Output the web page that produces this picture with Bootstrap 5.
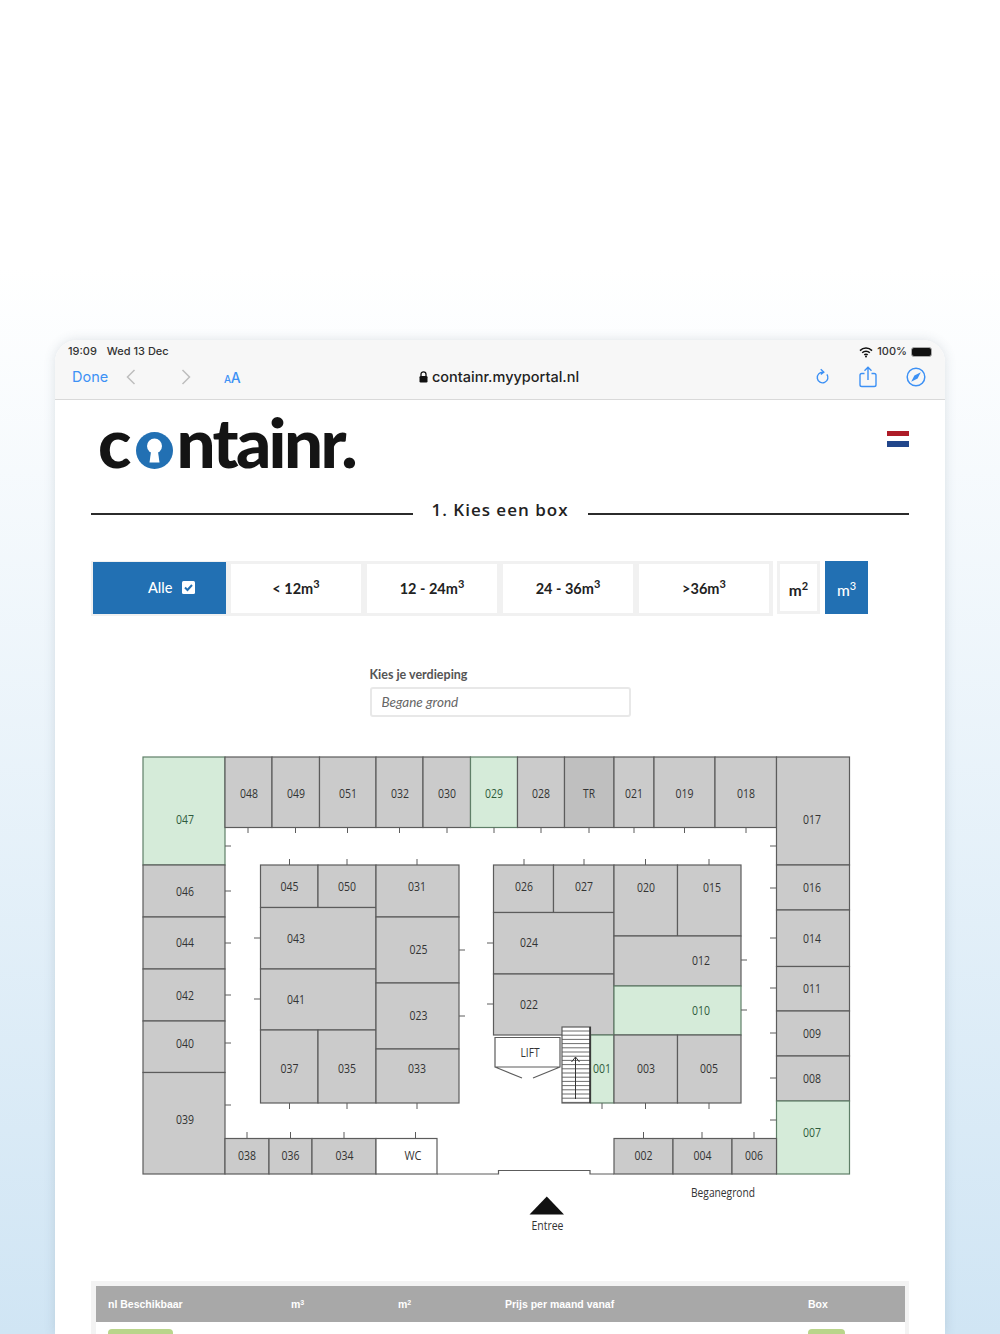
<!DOCTYPE html>
<html lang="nl">
<head>
  <meta charset="UTF-8">
  <meta name="viewport" content="width=device-width, initial-scale=1.0">
  <title>Containr - Kies een box</title>
  <link href="https://cdn.jsdelivr.net/npm/bootstrap@5.3.0/dist/css/bootstrap.min.css" rel="stylesheet">
  <style>
    html, body { height: 1334px; overflow: hidden; }
    body {
      font-family: "Lato", "Liberation Sans", sans-serif;
      background: linear-gradient(#fff 20%, #d0e5f4 100%);
      padding: 340px 55px 0;
    }
    .tablet {
      height: 994px;
      background: #fff;
      border-radius: 22px 22px 0 0;
      box-shadow: 0 0 12px rgba(60, 80, 100, .16);
      overflow: hidden;
    }

    /* safari chrome */
    .chrome { height: 60px; background: #f7f7f7; border-bottom: 1px solid #d9d9d9; font-family: "Inter", "Liberation Sans", sans-serif; }
    .status-row { height: 22px; padding: 3px 13px 0; font-size: 11px; font-weight: 500; color: #333; }
    .status-date { margin-left: 10px; }
    .tool-row { height: 37px; padding: 0 13px 7px 17px; }
    .tool-side { flex: 1 1 0; }
    .done-link { font-size: 14.5px; color: #3d91f5; width: 54px; }
    .next-arrow { margin-left: 45px; }
    .aa-label { color: #3d91f5; font-weight: 500; font-size: 14px; margin-left: 33px; letter-spacing: -.3px; }
    .aa-label small { font-size: 10px; }
    .url-text { font-size: 14.5px; font-weight: 500; color: #222; }
    .tool-icons { gap: 29px; padding-right: 6px; }
    .battery-shell { width: 21px; height: 10px; background: #111; border-radius: 3px; border: 1px solid #aaa; }

    /* page head */
    .page-head { height: 92px; padding: 10px 36px 0 43px; }
    .logo-word { font-family: "Lato", sans-serif; font-weight: 900; font-size: 69px; line-height: 64px; color: #141414; height: 64px; }
    .logo-tail { letter-spacing: -2.6px; margin-left: 2px; }
    .logo-key { margin: 22px 1px 0 5px; flex: none; }
    .flag-nl { width: 22px; height: 16px; margin-top: 21px; background: linear-gradient(#ae1c28 0 5px, #fff 5px 10px, #21468b 10px 16px); }

    .step-title { height: 44px; padding: 0 36px; }
    .step-line { flex: 1; height: 2px; background: #2b2b2b; }
    .step-title h2 { font-family: "Open Sans", sans-serif; font-size: 17px; font-weight: 600; letter-spacing: 1px; color: #222; margin: -7px 19px 0; }

    /* filters */
    .filter-bar { padding: 25px 0 0 36px; height: 131px; }
    .filter-group { background: #f1f1f1; padding: 3px 4px 3px 2px; height: 55px; gap: 6px; }
    .filter-btn {
      width: 130px; height: 49px; border-radius: 0; border: 0; padding: 0;
      background: #fff; color: #222; font-size: 14.5px; font-weight: 700;
    }
    .filter-btn sup { font-size: 11px; }
    .filter-btn.is-on, .unit-btn.is-on { background: #2270b3; color: #fff; font-weight: 500; }
    .filter-btn.is-on { width: 133px; height: 52px; margin: -2px -1px 0 0; padding-left: 24px; }
    .check-box { width: 13px; height: 13px; margin-left: 6px; vertical-align: -1px; }
    .unit-btn {
      width: 43px; height: 53px; border-radius: 0; padding: 6px 0 0; margin-left: 5px;
      background: #fff; border: 3px solid #f1f1f1; color: #222; font-size: 15.5px; font-weight: 700;
    }
    .filter-group + .unit-btn { margin-left: 4px; }
    .unit-btn.is-on { border-color: #2270b3; }
    .unit-btn sup { font-size: 11px; }

    /* floor */
    .floor-pick { width: 261px; height: 83px; margin: 0 auto; }
    .floor-pick label { font-size: 12.5px; font-weight: 700; color: #555; margin-bottom: 5px; display: block; line-height: 15px; }
    .floor-input.form-control { height: 30px; border: 2px solid #e8e8e8; border-radius: 3px; font-size: 13.5px; font-style: italic; color: #666; padding: 0 10px; }
    .plan-svg { display: block; margin: -5px auto 0; }
    .plan-svg text { font-family: "Open Sans", "Liberation Sans", sans-serif; font-size: 13.5px; fill: #333; text-anchor: middle; dominant-baseline: central; }
    .plan-svg text.on-green { fill: #2f5b3c; }

    /* result table */
    .result-wrap { margin: 41px 36px 0; padding: 5px 4px 0 5px; background: #f3f3f3; font-family: "Liberation Sans", sans-serif; }
    .result-table.table { margin: 0; table-layout: fixed; }
    .result-table th { background: #a8a8a8; color: #fff; font-size: 10.5px; font-weight: 700; padding: 10px 12px; height: 36px; line-height: 16px; border: 0; vertical-align: middle; }
    .result-table th sup { font-size: 7px; }
    .result-table td { background: #fff; padding: 7px 12px; font-size: 12px; border: 0; }
    .pill-green { display: block; height: 20px; background: #b9d58b; border-radius: 4px; }
    .pill-wide { width: 65px; }
    .pill-short { width: 37px; }
  </style>
</head>
<body>
  <div class="tablet">
    <div class="chrome">
      <div class="status-row d-flex justify-content-between">
        <div class="d-flex"><span>19:09</span><span class="status-date">Wed 13 Dec</span></div>
        <div class="d-flex align-items-start">
          <svg width="14" height="11" viewBox="0 0 14 11" class="me-1 mt-1"><path d="M1 3.6a8.5 8.5 0 0 1 12 0M3.2 5.8a5.4 5.4 0 0 1 7.6 0M5.3 7.9a2.4 2.4 0 0 1 3.4 0" fill="none" stroke="#111" stroke-width="1.5"/><circle cx="7" cy="9.6" r="1" fill="#111"/></svg>
          <span class="me-1">100%</span>
          <div class="battery-shell mt-1"></div>
        </div>
      </div>
      <div class="tool-row d-flex align-items-center">
        <div class="tool-side d-flex align-items-center">
          <span class="done-link">Done</span>
          <svg width="10" height="16" viewBox="0 0 10 16"><path d="M8.5 1 1.5 8l7 7" fill="none" stroke="#bdbdbd" stroke-width="1.5"/></svg>
          <svg width="10" height="16" viewBox="0 0 10 16" class="next-arrow"><path d="M1.5 1l7 7-7 7" fill="none" stroke="#bdbdbd" stroke-width="1.5"/></svg>
          <span class="aa-label"><small>A</small>A</span>
        </div>
        <div class="d-flex align-items-center gap-1">
          <svg width="9" height="12" viewBox="0 0 9 12"><path d="M2 5V3.3a2.5 2.5 0 0 1 5 0V5" fill="none" stroke="#111" stroke-width="1.3"/><rect x=".5" y="5" width="8" height="6.5" rx="1.2" fill="#111"/></svg>
          <span class="url-text">containr.myyportal.nl</span>
        </div>
        <div class="tool-side d-flex justify-content-end align-items-center tool-icons">
          <svg width="16" height="18" viewBox="0 0 18 20"><path d="M10.2 4.6a6 6 0 1 0 4.3 2.4" fill="none" stroke="#3d91f5" stroke-width="1.6"/><path d="M7.6 1.2l3.4 3.3-3.4 2.5" fill="none" stroke="#3d91f5" stroke-width="1.6"/></svg>
          <svg width="18" height="22" viewBox="0 0 18 22"><path d="M5.5 7.5H2.8A1.8 1.8 0 0 0 1 9.3v9.4a1.8 1.8 0 0 0 1.8 1.8h12.4a1.8 1.8 0 0 0 1.8-1.8V9.3a1.8 1.8 0 0 0-1.8-1.8h-2.7M9 14V1.5M5.5 4.8 9 1.3l3.5 3.5" fill="none" stroke="#3d91f5" stroke-width="1.4"/></svg>
          <svg width="20" height="20" viewBox="0 0 20 20"><circle cx="10" cy="10" r="8.8" fill="none" stroke="#3d91f5" stroke-width="1.5"/><path d="M14.8 5.2 11.6 11.6 5.2 14.8 8.4 8.4z" fill="#3d91f5"/></svg>
        </div>
      </div>
    </div>

    <div class="page-head d-flex justify-content-between">
      <div class="logo-word d-flex">
        <span>c</span>
        <svg class="logo-key" width="37" height="37" viewBox="0 0 37 37"><circle cx="18.5" cy="18.5" r="18.5" fill="#2270b3"/><circle cx="18.5" cy="14" r="7.5" fill="#fff"/><path d="M15.5 16h6l2 14.5h-10z" fill="#fff"/></svg>
        <span class="logo-tail">ntainr.</span>
      </div>
      <div class="flag-nl"></div>
    </div>

    <div class="step-title d-flex align-items-center">
      <div class="step-line"></div>
      <h2>1. Kies een box</h2>
      <div class="step-line"></div>
    </div>

    <div class="filter-bar d-flex align-items-start">
      <div class="filter-group d-flex align-items-start">
        <button class="btn filter-btn is-on">Alle <svg class="check-box" viewBox="0 0 13 13"><rect width="13" height="13" rx="1.5" fill="#fff"/><path d="M3 6.5l2.5 2.5L10 4" fill="none" stroke="#2270b3" stroke-width="2"/></svg></button>
        <button class="btn filter-btn">&lt; 12m<sup>3</sup></button>
        <button class="btn filter-btn">12 - 24m<sup>3</sup></button>
        <button class="btn filter-btn">24 - 36m<sup>3</sup></button>
        <button class="btn filter-btn">&gt;36m<sup>3</sup></button>
      </div>
      <button class="btn unit-btn">m<sup>2</sup></button>
      <button class="btn unit-btn is-on">m<sup>3</sup></button>
    </div>

    <div class="floor-pick">
      <label for="floorInput">Kies je verdieping</label>
      <input id="floorInput" class="form-control floor-input" type="text" value="Begane grond">
    </div>

    <svg id="plan" class="plan-svg" width="740" height="495" viewBox="130 745 740 495"></svg>

    <div class="result-wrap">
      <table class="table result-table">
        <thead>
          <tr><th id="colFirst">nl Beschikbaar</th><th>m<sup>3</sup></th><th>m<sup>2</sup></th><th>Prijs per maand vanaf</th><th>Box</th></tr>
        </thead>
        <tbody>
          <tr><td><span class="pill-green pill-wide"></span></td><td></td><td></td><td></td><td><span class="pill-green pill-short"></span></td></tr>
        </tbody>
      </table>
    </div>
  </div>

  <script>
    // Floor plan data: x1, y1, x2, y2, label, label x, label y, fill type
    const G = '#cbcbcb', M = '#d5ebd9', T = '#bfbfbf', W = '#fff';
    const boxes = [
      [143,757,225,865,'047',185,819,M],[143,865,225,917,'046',185,891,G],[143,917,225,969,'044',185,942,G],
      [143,969,225,1021,'042',185,995,G],[143,1021,225,1072.5,'040',185,1043,G],[143,1072.5,225,1174,'039',185,1119,G],
      [225,757,272,827.5,'048',249,793,G],[272,757,319.5,827.5,'049',296,793,G],[319.5,757,376,827.5,'051',348,793,G],
      [376,757,423,827.5,'032',400,793,G],[423,757,470.5,827.5,'030',447,793,G],[470.5,757,517.5,827.5,'029',494,793,M],
      [517.5,757,564.5,827.5,'028',541,793,G],[564.5,757,614,827.5,'TR',589,793,T],[614,757,654,827.5,'021',634,793,G],
      [654,757,715,827.5,'019',684.5,793,G],[715,757,776.5,827.5,'018',746,793,G],
      [776.5,757,849.5,865,'017',812,819,G],[776.5,865,849.5,910,'016',812,887,G],[776.5,910,849.5,966.5,'014',812,938,G],
      [776.5,966.5,849.5,1011,'011',812,988,G],[776.5,1011,849.5,1056,'009',812,1033,G],[776.5,1056,849.5,1101,'008',812,1078,G],
      [776.5,1101,849.5,1174,'007',812,1132,M],
      [260.5,865,318,907.5,'045',289.5,886,G],[318,865,376,907.5,'050',347,886,G],[260.5,907.5,376,969,'043',296,938,G],
      [260.5,969,376,1030,'041',296,999,G],[260.5,1030,318,1103,'037',289.5,1068,G],[318,1030,376,1103,'035',347,1068,G],
      [376,865,459,917,'031',417,886,G],[376,917,459,983,'025',418.5,949,G],[376,983,459,1049,'023',418.5,1015,G],[376,1049,459,1103,'033',417,1068,G],
      [493.5,865,553.5,912.5,'026',524,886,G],[553.5,865,614,912.5,'027',584,886,G],[493.5,912.5,614,974,'024',529,942,G],
      [493.5,974,614,1035,'022',529,1004,G],[614,865,677.5,936,'020',646,887,G],[677.5,865,741,936,'015',712,887,G],
      [614,936,741,986,'012',701,960,G],[614,986,741,1035,'010',701,1010,M],[590.5,1035,614,1103,'001',602,1068,M],
      [614,1035,677.5,1103,'003',646,1068,G],[677.5,1035,741,1103,'005',709,1068,G],
      [225,1138.5,269,1174,'038',247,1155,G],[269,1138.5,312,1174,'036',290.5,1155,G],[312,1138.5,376,1174,'034',344.5,1155,G],
      [376,1138.5,437,1174,'WC',413,1155,W],[614,1138.5,673,1174,'002',643.5,1155,G],[673,1138.5,732,1174,'004',702.5,1155,G],[732,1138.5,776.5,1174,'006',754,1155,G]
    ];
    // door ticks
    const vTicks = [
      [827.5,833,[248,295.5,347.5,399.5,447,494,541,589,634,684.5,746]],
      [859,865,[289.5,347,417,524,584,645.5,709]],
      [1103,1109,[289.5,347,417,602,645.5,709]],
      [1132,1138.5,[247,290.5,344,415.5,643.5,702,754]]
    ];
    const hTicks = [
      [225,231,[846,891,943,995,1043,1105]],[254,260.5,[938,999]],[459,465,[950,1016]],
      [487,493.5,[943,1004]],[741,747,[960,1010]],[770,776.5,[846,888,938,988,1033,1078,1120]]
    ];
    const line = '#5c5c5c';
    const label = (x, y, str, cls) => {
      // squeezed, the drawing uses a condensed face
      const w = { WC: 17, TR: 12, LIFT: 19, Beganegrond: 64, Entree: 32 }[str] || 18;
      return `<text x="${x}" y="${y}" textLength="${w}" lengthAdjust="spacingAndGlyphs"${cls ? ' class="on-green"' : ''}>${str}</text>`;
    };
    let out = '';
    boxes.forEach(b => {
      const stroke = b[7] === M ? '#5f7f68' : line;
      out += `<rect x="${b[0]}" y="${b[1]}" width="${b[2]-b[0]}" height="${b[3]-b[1]}" fill="${b[7]}" stroke="${stroke}" stroke-width="1.2"/>`;
    });
    vTicks.forEach(t => t[2].forEach(x => { out += `<path d="M${x} ${t[0]}V${t[1]}" stroke="${line}"/>`; }));
    hTicks.forEach(t => t[2].forEach(y => { out += `<path d="M${t[0]} ${y}H${t[1]}" stroke="${line}"/>`; }));
    // entrance wall, lift and stairs
    out += `<path d="M437 1174H498.5V1170.5H590V1174H614" fill="none" stroke="${line}" stroke-width="1.2"/>`;
    out += `<path d="M495 1037.5H560V1067H495zM495 1067L522 1078M560 1067L533 1078" fill="#fff" stroke="${line}" stroke-width="1.2"/>`;
    out += `<rect x="562" y="1027" width="28.5" height="76" fill="#fff" stroke="${line}" stroke-width="1.2"/>`;
    for (let y = 1031; y < 1103; y += 4.2) out += `<path d="M562 ${y}H590" stroke="${line}" stroke-width=".9"/>`;
    out += `<path d="M590 1027V1103" stroke="#333" stroke-width="1.6"/><path d="M575.5 1099V1057M571.5 1062l4-5 4 5" fill="none" stroke="#333"/>`;
    out += `<path d="M546.8 1196.5L564 1214.5H529.5z" fill="#111"/>`;
    boxes.forEach(b => { out += label(b[5], b[6], b[4], b[7] === M); });
    out += label(530, 1052, 'LIFT') + label(723, 1192, 'Beganegrond') + label(547.5, 1225, 'Entree');
    document.getElementById('plan').innerHTML = out;

    // table column widths
    document.querySelectorAll('.result-table th').forEach((c, i) => {
      c.style.width = [183, 107, 107, 303, 109][i] + 'px';
    });
  </script>
  <script src="https://cdn.jsdelivr.net/npm/bootstrap@5.3.0/dist/js/bootstrap.bundle.min.js"></script>
</body>
</html>
